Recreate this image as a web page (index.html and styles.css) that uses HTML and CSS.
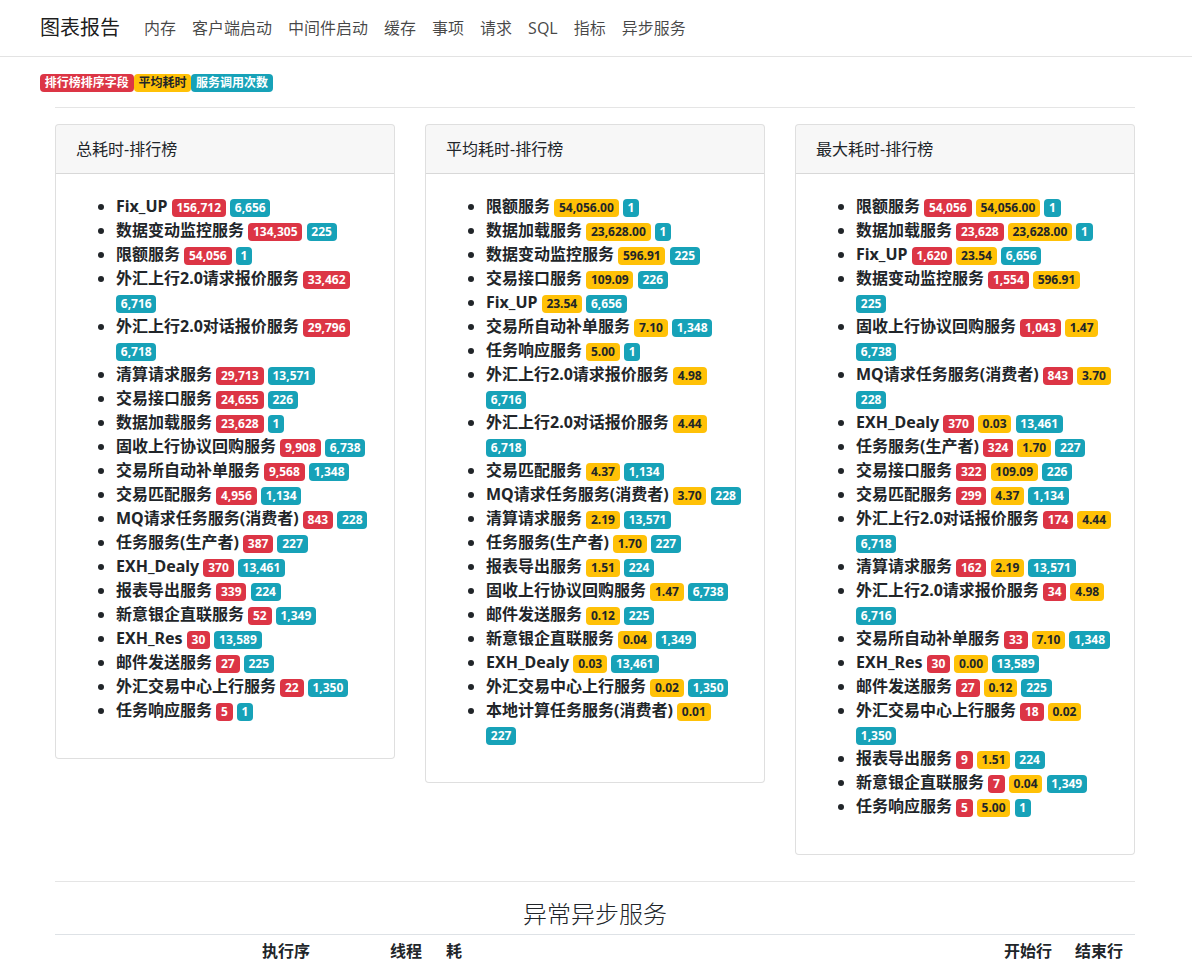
FILE: index.html
```html
<!DOCTYPE html>
<html lang="zh-CN">
<head>
<meta charset="utf-8">
<title>图表报告</title>
<link rel="stylesheet" href="styles.css">
</head>
<body>
<nav class="navbar">
  <a class="brand" href="#">图表报告</a>
  <ul class="nav">
    <li><a href="#">内存</a></li>
    <li><a href="#">客户端启动</a></li>
    <li><a href="#">中间件启动</a></li>
    <li><a href="#">缓存</a></li>
    <li><a href="#">事项</a></li>
    <li><a href="#">请求</a></li>
    <li><a href="#">SQL</a></li>
    <li><a href="#">指标</a></li>
    <li><a href="#">异步服务</a></li>
  </ul>
</nav>

<div class="legend"><span class="badge red">排行榜排序字段</span><span class="badge yellow">平均耗时</span><span class="badge info">服务调用次数</span></div>

<main class="container">
  <hr class="rule">
  <div class="cards">
    <section class="card">
      <div class="card-header">总耗时-排行榜</div>
      <div class="card-body">
        <ul class="rank">
          <li>Fix_UP <span class="badge red">156,712</span> <span class="badge info">6,656</span></li>
          <li>数据变动监控服务 <span class="badge red">134,305</span> <span class="badge info">225</span></li>
          <li>限额服务 <span class="badge red">54,056</span> <span class="badge info">1</span></li>
          <li>外汇上行2.0请求报价服务 <span class="badge red">33,462</span> <span class="badge info">6,716</span></li>
          <li>外汇上行2.0对话报价服务 <span class="badge red">29,796</span> <span class="badge info">6,718</span></li>
          <li>清算请求服务 <span class="badge red">29,713</span> <span class="badge info">13,571</span></li>
          <li>交易接口服务 <span class="badge red">24,655</span> <span class="badge info">226</span></li>
          <li>数据加载服务 <span class="badge red">23,628</span> <span class="badge info">1</span></li>
          <li>固收上行协议回购服务 <span class="badge red">9,908</span> <span class="badge info">6,738</span></li>
          <li>交易所自动补单服务 <span class="badge red">9,568</span> <span class="badge info">1,348</span></li>
          <li>交易匹配服务 <span class="badge red">4,956</span> <span class="badge info">1,134</span></li>
          <li>MQ请求任务服务(消费者) <span class="badge red">843</span> <span class="badge info">228</span></li>
          <li>任务服务(生产者) <span class="badge red">387</span> <span class="badge info">227</span></li>
          <li>EXH_Dealy <span class="badge red">370</span> <span class="badge info">13,461</span></li>
          <li>报表导出服务 <span class="badge red">339</span> <span class="badge info">224</span></li>
          <li>新意银企直联服务 <span class="badge red">52</span> <span class="badge info">1,349</span></li>
          <li>EXH_Res <span class="badge red">30</span> <span class="badge info">13,589</span></li>
          <li>邮件发送服务 <span class="badge red">27</span> <span class="badge info">225</span></li>
          <li>外汇交易中心上行服务 <span class="badge red">22</span> <span class="badge info">1,350</span></li>
          <li>任务响应服务 <span class="badge red">5</span> <span class="badge info">1</span></li>
        </ul>
      </div>
    </section>

    <section class="card">
      <div class="card-header">平均耗时-排行榜</div>
      <div class="card-body">
        <ul class="rank">
          <li>限额服务 <span class="badge yellow">54,056.00</span> <span class="badge info">1</span></li>
          <li>数据加载服务 <span class="badge yellow">23,628.00</span> <span class="badge info">1</span></li>
          <li>数据变动监控服务 <span class="badge yellow">596.91</span> <span class="badge info">225</span></li>
          <li>交易接口服务 <span class="badge yellow">109.09</span> <span class="badge info">226</span></li>
          <li>Fix_UP <span class="badge yellow">23.54</span> <span class="badge info">6,656</span></li>
          <li>交易所自动补单服务 <span class="badge yellow">7.10</span> <span class="badge info">1,348</span></li>
          <li>任务响应服务 <span class="badge yellow">5.00</span> <span class="badge info">1</span></li>
          <li>外汇上行2.0请求报价服务 <span class="badge yellow">4.98</span> <span class="badge info">6,716</span></li>
          <li>外汇上行2.0对话报价服务 <span class="badge yellow">4.44</span> <span class="badge info">6,718</span></li>
          <li>交易匹配服务 <span class="badge yellow">4.37</span> <span class="badge info">1,134</span></li>
          <li>MQ请求任务服务(消费者) <span class="badge yellow">3.70</span> <span class="badge info">228</span></li>
          <li>清算请求服务 <span class="badge yellow">2.19</span> <span class="badge info">13,571</span></li>
          <li>任务服务(生产者) <span class="badge yellow">1.70</span> <span class="badge info">227</span></li>
          <li>报表导出服务 <span class="badge yellow">1.51</span> <span class="badge info">224</span></li>
          <li>固收上行协议回购服务 <span class="badge yellow">1.47</span> <span class="badge info">6,738</span></li>
          <li>邮件发送服务 <span class="badge yellow">0.12</span> <span class="badge info">225</span></li>
          <li>新意银企直联服务 <span class="badge yellow">0.04</span> <span class="badge info">1,349</span></li>
          <li>EXH_Dealy <span class="badge yellow">0.03</span> <span class="badge info">13,461</span></li>
          <li>外汇交易中心上行服务 <span class="badge yellow">0.02</span> <span class="badge info">1,350</span></li>
          <li>本地计算任务服务(消费者) <span class="badge yellow">0.01</span> <span class="badge info">227</span></li>
        </ul>
      </div>
    </section>

    <section class="card">
      <div class="card-header">最大耗时-排行榜</div>
      <div class="card-body">
        <ul class="rank">
          <li>限额服务 <span class="badge red">54,056</span> <span class="badge yellow">54,056.00</span> <span class="badge info">1</span></li>
          <li>数据加载服务 <span class="badge red">23,628</span> <span class="badge yellow">23,628.00</span> <span class="badge info">1</span></li>
          <li>Fix_UP <span class="badge red">1,620</span> <span class="badge yellow">23.54</span> <span class="badge info">6,656</span></li>
          <li>数据变动监控服务 <span class="badge red">1,554</span> <span class="badge yellow">596.91</span> <span class="badge info">225</span></li>
          <li>固收上行协议回购服务 <span class="badge red">1,043</span> <span class="badge yellow">1.47</span> <span class="badge info">6,738</span></li>
          <li>MQ请求任务服务(消费者) <span class="badge red">843</span> <span class="badge yellow">3.70</span> <span class="badge info">228</span></li>
          <li>EXH_Dealy <span class="badge red">370</span> <span class="badge yellow">0.03</span> <span class="badge info">13,461</span></li>
          <li>任务服务(生产者) <span class="badge red">324</span> <span class="badge yellow">1.70</span> <span class="badge info">227</span></li>
          <li>交易接口服务 <span class="badge red">322</span> <span class="badge yellow">109.09</span> <span class="badge info">226</span></li>
          <li>交易匹配服务 <span class="badge red">299</span> <span class="badge yellow">4.37</span> <span class="badge info">1,134</span></li>
          <li>外汇上行2.0对话报价服务 <span class="badge red">174</span> <span class="badge yellow">4.44</span> <span class="badge info">6,718</span></li>
          <li>清算请求服务 <span class="badge red">162</span> <span class="badge yellow">2.19</span> <span class="badge info">13,571</span></li>
          <li>外汇上行2.0请求报价服务 <span class="badge red">34</span> <span class="badge yellow">4.98</span> <span class="badge info">6,716</span></li>
          <li>交易所自动补单服务 <span class="badge red">33</span> <span class="badge yellow">7.10</span> <span class="badge info">1,348</span></li>
          <li>EXH_Res <span class="badge red">30</span> <span class="badge yellow">0.00</span> <span class="badge info">13,589</span></li>
          <li>邮件发送服务 <span class="badge red">27</span> <span class="badge yellow">0.12</span> <span class="badge info">225</span></li>
          <li>外汇交易中心上行服务 <span class="badge red">18</span> <span class="badge yellow">0.02</span> <span class="badge info">1,350</span></li>
          <li>报表导出服务 <span class="badge red">9</span> <span class="badge yellow">1.51</span> <span class="badge info">224</span></li>
          <li>新意银企直联服务 <span class="badge red">7</span> <span class="badge yellow">0.04</span> <span class="badge info">1,349</span></li>
          <li>任务响应服务 <span class="badge red">5</span> <span class="badge yellow">5.00</span> <span class="badge info">1</span></li>
        </ul>
      </div>
    </section>
  </div>

  <hr class="rule rule-bottom">
  <h3 class="section-title">异常异步服务</h3>
  <table class="async-table">
    <colgroup>
      <col class="c-lead"><col class="c-seq"><col class="c-thread"><col class="c-cost"><col class="c-start"><col class="c-end">
    </colgroup>
    <thead>
      <tr><th></th><th>执行序</th><th>线程</th><th>耗</th><th>开始行</th><th>结束行</th></tr>
    </thead>
  </table>
</main>
</body>
</html>
```

FILE: styles.css
```css
* { box-sizing: border-box; }

html, body {
  margin: 0;
  padding: 0;
  background: #fff;
}

body {
  font-family: "Noto Sans", "Noto Sans CJK SC", sans-serif;
  font-size: 16px;
  line-height: 1.5;
  color: #212529;
}

a { text-decoration: none; }

.navbar {
  display: flex;
  align-items: center;
  height: 57px;
  padding: 0 40px;
  border-bottom: 1px solid #e3e3e3;
}

.brand {
  font-size: 20px;
  line-height: 30px;
  color: rgba(0, 0, 0, .9);
  margin-right: 16px;
}

.nav {
  display: flex;
  list-style: none;
  margin: 0;
  padding: 0;
}

.nav a {
  display: block;
  padding: 0 8px;
  color: rgba(0, 0, 0, .72);
  line-height: 24px;
}

.legend {
  padding: 17px 40px 0;
  height: 34px;
  line-height: 17px;
  display: flex;
  align-items: flex-start;
}

.badge {
  display: inline-block;
  padding: 3px 4.8px;
  font-size: 12px;
  font-weight: 700;
  line-height: 1;
  text-align: center;
  white-space: nowrap;
  vertical-align: baseline;
  border-radius: 4px;
  color: #fff;
}

.badge.red { background: #dc3545; }
.badge.yellow { background: #ffc107; color: #212529; }
.badge.info { background: #17a2b8; }

.container {
  width: 1080px;
  margin-left: 55px;
}

.rule {
  border: 0;
  border-top: 1px solid rgba(0, 0, 0, .1);
  margin: 16px 0 16px;
}

.rule-bottom {
  margin: 26px 0 0;
}

.cards {
  display: grid;
  grid-template-columns: repeat(3, 1fr);
  gap: 30px;
  align-items: start;
}

.card {
  border: 1px solid rgba(0, 0, 0, .125);
  border-radius: 4px;
  background: #fff;
}

.card-header {
  padding: 12px 20px;
  background: rgba(0, 0, 0, .03);
  border-bottom: 1px solid rgba(0, 0, 0, .125);
  line-height: 24px;
  border-radius: 3px 3px 0 0;
}

.card-body {
  padding: 20px;
}

.rank {
  margin: 0 0 16px;
  padding-left: 40px;
  font-weight: 700;
}

.rank li {
  line-height: 24px;
}

.section-title {
  margin: 18px 0 5px;
  font-size: 24px;
  font-weight: 300;
  line-height: 1.2;
  text-align: center;
}

.async-table {
  width: 100%;
  border-collapse: collapse;
}

.async-table th {
  border-top: 1px solid #dee2e6;
  padding: 4px 5px;
  text-align: left;
  font-weight: 700;
  line-height: 24px;
}

.c-lead { width: 202px; }
.c-seq { width: 128px; }
.c-thread { width: 56px; }
.c-cost { width: 558px; }
.c-start { width: 71px; }
.c-end { width: 65px; }
```
